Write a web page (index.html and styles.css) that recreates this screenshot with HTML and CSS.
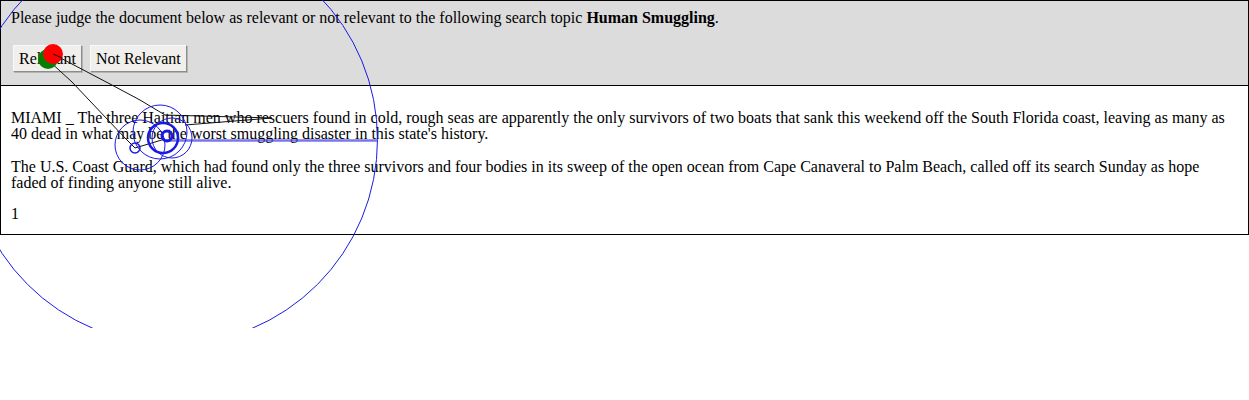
FILE: index.html
```html
<!DOCTYPE html>
<html>
<head>
<meta charset="utf-8">
<title>Relevance judgement</title>
<link rel="stylesheet" href="styles.css">
</head>
<body>
<div class="page">
  <div class="header">
    <div class="prompt">Please judge the document below as relevant or not relevant to the following search topic <b>Human Smuggling</b>.</div>
    <div class="actions">
      <button class="btn">Relevant</button>
      <button class="btn">Not Relevant</button>
    </div>
  </div>
  <div class="doc">
    <p>MIAMI _ The three Haitian men who rescuers found in cold, rough seas are apparently the only survivors of two boats that sank this weekend off the South Florida coast, leaving as many as 40 dead in what may be the worst smuggling disaster in this state's history.</p>
    <p>The U.S. Coast Guard, which had found only the three survivors and four bodies in its sweep of the open ocean from Cape Canaveral to Palm Beach, called off its search Sunday as hope faded of finding anyone still alive.</p>
    <div class="pagenum">1</div>
  </div>
  <svg class="gaze" width="1249" height="328" viewBox="0 0 1249 328">
    <circle cx="172.5" cy="139.5" r="205" fill="none" stroke="#1a1ae6" stroke-width="1"/>
    <line x1="165" y1="140.5" x2="377.5" y2="140.5" stroke="#4a4ae8" stroke-opacity="0.75" stroke-width="2.5"/>
    <polyline points="48,60 72,82 125,138 135,148 165,139" fill="none" stroke="#111" stroke-width="1"/>
    <polyline points="53,54 110,84 140,100 165,115 272,118 185,125" fill="none" stroke="#111" stroke-width="1"/>
    <circle cx="140" cy="145" r="25" fill="none" stroke="#1a1ae6" stroke-width="1"/>
    <circle cx="160" cy="132" r="27" fill="none" stroke="#1a1ae6" stroke-width="1"/>
    <circle cx="172" cy="138" r="20" fill="none" stroke="#1a1ae6" stroke-width="1"/>
    <circle cx="163" cy="138" r="15" fill="none" stroke="#1a1ae6" stroke-width="2.5"/>
    <circle cx="167" cy="136" r="5" fill="none" stroke="#1a1ae6" stroke-width="3"/>
    <circle cx="135" cy="148" r="5" fill="none" stroke="#1a1ae6" stroke-width="1.5"/>
    <circle cx="48" cy="59" r="10" fill="#008000"/>
    <circle cx="53" cy="54" r="10" fill="#ff0000"/>
    <line x1="53" y1="54" x2="62" y2="58" stroke="#111" stroke-width="1"/>
  </svg>
</div>
</body>
</html>
```

FILE: styles.css
```css
html, body {
  margin: 0;
  padding: 0;
  background: #ffffff;
}

.page {
  position: relative;
  width: 1249px;
  min-height: 360px;
  font-family: "Liberation Serif", "Times New Roman", serif;
  font-size: 16px;
  line-height: 16px;
  color: #000;
}

.header {
  background: #dcdcdc;
  border: 1px solid #000;
  height: 86px;
  box-sizing: border-box;
  padding: 9px 10px 0 10px;
  display: flex;
  flex-direction: column;
}

.prompt {
  height: 16px;
}

.actions {
  display: flex;
  gap: 8px;
  margin-top: 19px;
  padding-left: 2px;
}

.btn {
  font-family: "Liberation Serif", "Times New Roman", serif;
  font-size: 16px;
  line-height: 18px;
  height: 27px;
  padding: 0 5px;
  margin: 0;
  background: #f0efeb;
  color: #000;
  border-style: solid;
  border-width: 1px;
  border-color: #fafafa #8c8c8c #8c8c8c #fafafa;
  box-shadow: 1px 1px 0 #b5b5b5;
  border-radius: 0;
}

.doc {
  border: 1px solid #000;
  border-top: none;
  box-sizing: border-box;
  height: 149px;
  padding: 7px 10px 10px 10px;
  background: #fff;
}

.doc p {
  margin: 17px 0 15px 0;
}

.pagenum {
  margin-top: 0;
}

.gaze {
  position: absolute;
  left: 0;
  top: 0;
  width: 1249px;
  height: 328px;
  overflow: hidden;
  pointer-events: none;
}
```
